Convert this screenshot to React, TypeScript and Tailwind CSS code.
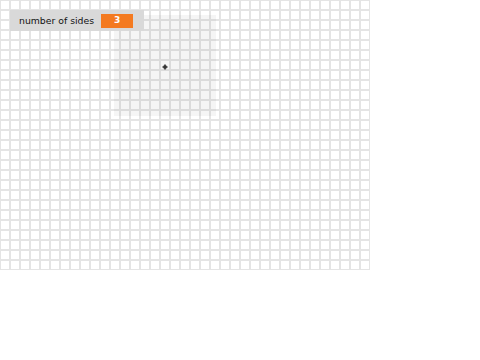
import React from 'react';

const COLS = 37;
const ROWS = 27;

function GridCell() {
  return <div className="w-[10px] h-[10px] border border-[#e4e4e4] bg-white" />;
}

export default function App() {
  const cells = Array.from({ length: COLS * ROWS });

  return (
    <div className="w-[480px] h-[360px] bg-white font-['DejaVu_Sans',Verdana,sans-serif]">
      <div className="relative w-[370px] h-[270px]">
        {/* grid canvas */}
        <div className="grid grid-cols-[repeat(37,10px)] grid-rows-[repeat(27,10px)]">
          {cells.map((_, i) => (
            <GridCell key={i} />
          ))}
        </div>

        {/* shape area */}
        <div className="absolute left-[114px] top-[15px] w-[102px] h-[101px] bg-black/[0.04] flex items-center justify-center">
          <svg width="6" height="6" viewBox="0 0 6 6" className="mt-[2px]">
            <path d="M3 0.5 L3 5.5 M0.5 3 L5.5 3" stroke="#333" strokeWidth="1.6" />
            <rect x="1.5" y="1.5" width="3" height="3" fill="#333" />
          </svg>
        </div>

        {/* controls */}
        <div className="absolute left-[10px] top-[10px] w-[134px] h-[21px] bg-[#d9d9d9] flex items-center pl-[9px] gap-[7px]">
          <span className="text-[9.3px] leading-none text-[#111]">number of sides</span>
          <div className="w-[32px] h-[14px] bg-[#f47a20] flex items-center justify-center">
            <span className="text-[9px] leading-none font-bold text-white">3</span>
          </div>
        </div>
      </div>
    </div>
  );
}
